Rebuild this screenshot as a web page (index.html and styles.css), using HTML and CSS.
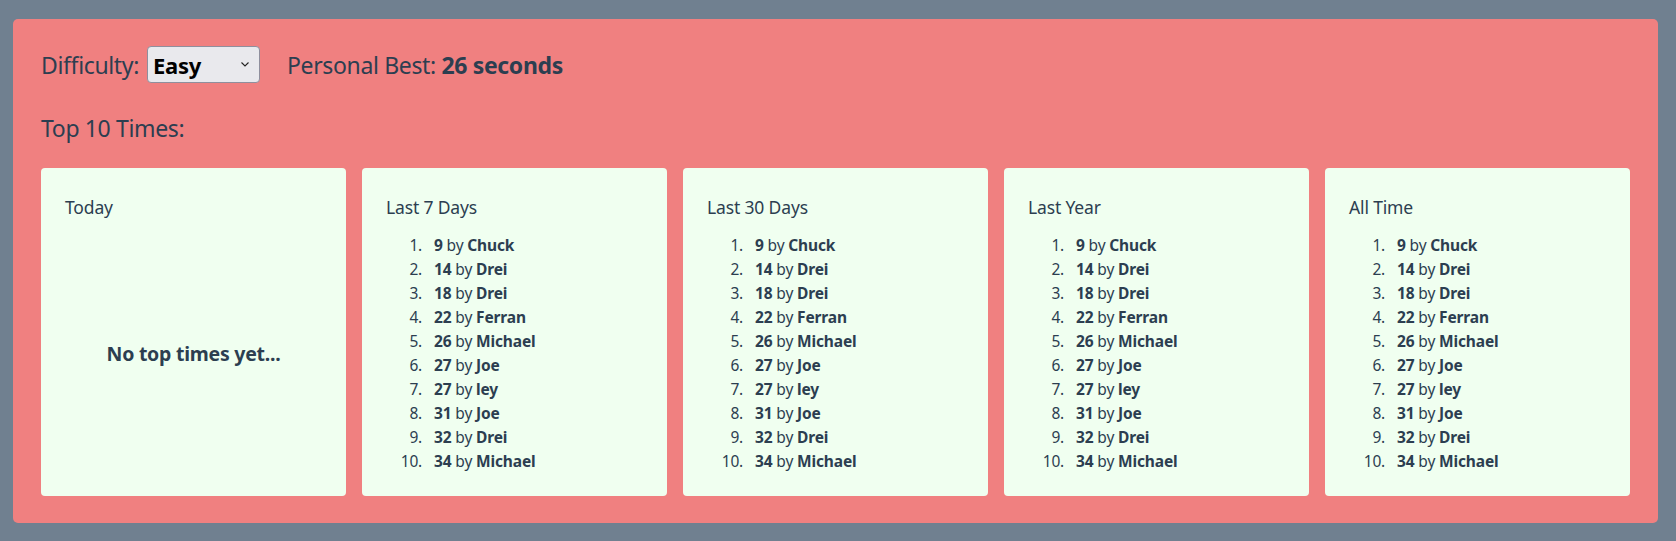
FILE: index.html
```html
<!DOCTYPE html>
<html lang="en">
<head>
<meta charset="utf-8">
<title>Top Times</title>
<link rel="stylesheet" href="styles.css">
</head>
<body>
<div class="panel">
  <div class="settings">
    <label class="difficulty">Difficulty:
      <span class="select-wrap">
        <select class="select">
          <option>Easy</option>
          <option>Medium</option>
          <option>Hard</option>
        </select>
        <svg class="chevron" width="8" height="5" viewBox="0 0 8 5"><path d="M0.5 0.5 L4 4 L7.5 0.5" fill="none" stroke="#222" stroke-width="1.1"/></svg>
      </span>
    </label>
    <span class="best">Personal Best: <b>26 seconds</b></span>
  </div>
  <div class="heading">Top 10 Times:</div>
  <div class="cards">
    <div class="card">
      <div class="card-title">Today</div>
      <div class="empty">No top times yet...</div>
    </div>
    <div class="card">
      <div class="card-title">Last 7 Days</div>
      <ol class="list">
        <li><b>9</b> by <b>Chuck</b></li>
        <li><b>14</b> by <b>Drei</b></li>
        <li><b>18</b> by <b>Drei</b></li>
        <li><b>22</b> by <b>Ferran</b></li>
        <li><b>26</b> by <b>Michael</b></li>
        <li><b>27</b> by <b>Joe</b></li>
        <li><b>27</b> by <b>ley</b></li>
        <li><b>31</b> by <b>Joe</b></li>
        <li><b>32</b> by <b>Drei</b></li>
        <li><b>34</b> by <b>Michael</b></li>
      </ol>
    </div>
    <div class="card">
      <div class="card-title">Last 30 Days</div>
      <ol class="list">
        <li><b>9</b> by <b>Chuck</b></li>
        <li><b>14</b> by <b>Drei</b></li>
        <li><b>18</b> by <b>Drei</b></li>
        <li><b>22</b> by <b>Ferran</b></li>
        <li><b>26</b> by <b>Michael</b></li>
        <li><b>27</b> by <b>Joe</b></li>
        <li><b>27</b> by <b>ley</b></li>
        <li><b>31</b> by <b>Joe</b></li>
        <li><b>32</b> by <b>Drei</b></li>
        <li><b>34</b> by <b>Michael</b></li>
      </ol>
    </div>
    <div class="card">
      <div class="card-title">Last Year</div>
      <ol class="list">
        <li><b>9</b> by <b>Chuck</b></li>
        <li><b>14</b> by <b>Drei</b></li>
        <li><b>18</b> by <b>Drei</b></li>
        <li><b>22</b> by <b>Ferran</b></li>
        <li><b>26</b> by <b>Michael</b></li>
        <li><b>27</b> by <b>Joe</b></li>
        <li><b>27</b> by <b>ley</b></li>
        <li><b>31</b> by <b>Joe</b></li>
        <li><b>32</b> by <b>Drei</b></li>
        <li><b>34</b> by <b>Michael</b></li>
      </ol>
    </div>
    <div class="card">
      <div class="card-title">All Time</div>
      <ol class="list">
        <li><b>9</b> by <b>Chuck</b></li>
        <li><b>14</b> by <b>Drei</b></li>
        <li><b>18</b> by <b>Drei</b></li>
        <li><b>22</b> by <b>Ferran</b></li>
        <li><b>26</b> by <b>Michael</b></li>
        <li><b>27</b> by <b>Joe</b></li>
        <li><b>27</b> by <b>ley</b></li>
        <li><b>31</b> by <b>Joe</b></li>
        <li><b>32</b> by <b>Drei</b></li>
        <li><b>34</b> by <b>Michael</b></li>
      </ol>
    </div>
  </div>
</div>
</body>
</html>
```

FILE: styles.css
```css
html, body {
  margin: 0;
  padding: 0;
}
body {
  background: #708090;
  font-family: "Segoe UI", "Noto Sans", sans-serif;
  color: #2c3e50;
  padding: 19px 18px 18px 13px;
}
.panel {
  background: #f08080;
  border-radius: 5px;
  padding: 27px 28px 27px 28px;
}
.settings {
  display: flex;
  align-items: center;
  font-size: 23px;
  letter-spacing: -0.35px;
  line-height: 36px;
  height: 37px;
}
.difficulty {
  display: flex;
  align-items: center;
  gap: 8px;
}
.select-wrap {
  position: relative;
  display: inline-block;
}
.select {
  appearance: none;
  -webkit-appearance: none;
  width: 113px;
  height: 37px;
  margin: 0;
  padding: 0 0 0 5px;
  background: #e9e9ed;
  border: 1px solid #8f8f9d;
  border-radius: 4px;
  font-family: "Segoe UI", "Noto Sans", sans-serif;
  font-size: 22px;
  letter-spacing: -0.3px;
  font-weight: 700;
  color: #000;
}
.chevron {
  position: absolute;
  right: 11px;
  top: 16px;
  pointer-events: none;
}
.best {
  margin-left: 27px;
}
.best b {
  font-weight: 700;
}
.heading {
  font-size: 23px;
  letter-spacing: -0.35px;
  line-height: 36px;
  margin-top: 27px;
  margin-bottom: 22px;
}
.cards {
  display: grid;
  grid-template-columns: repeat(5, 1fr);
  gap: 16px;
}
.card {
  background: #f0fff0;
  border-radius: 4px;
  padding: 26px 24px 23px 24px;
  display: flex;
  flex-direction: column;
}
.card-title {
  font-size: 17.5px;
  letter-spacing: -0.15px;
  line-height: 27px;
  margin-bottom: 12px;
}
.list {
  margin: 0;
  padding-left: 40px;
  font-size: 15.5px;
  letter-spacing: -0.15px;
  line-height: 24px;
}
.list li {
  padding-left: 8px;
}
.list b {
  font-weight: 700;
}
.empty {
  flex: 1;
  display: flex;
  align-items: center;
  justify-content: center;
  font-size: 19.5px;
  letter-spacing: -0.25px;
  line-height: 30px;
  font-weight: 700;
  padding-top: 2px;
}
```
